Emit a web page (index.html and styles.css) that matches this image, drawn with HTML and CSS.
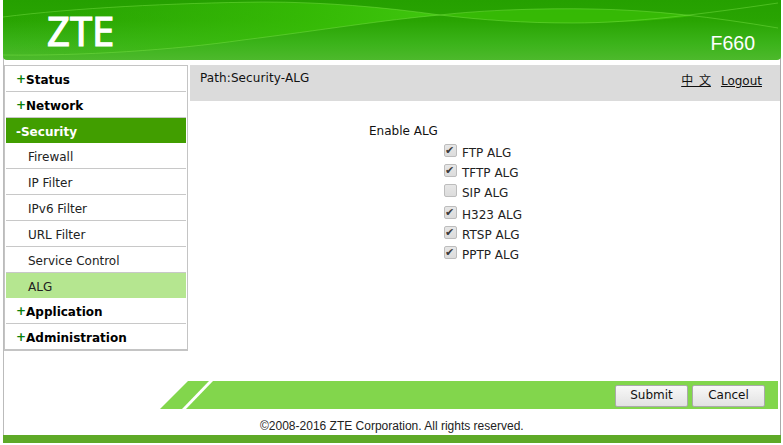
FILE: index.html
```html
<!doctype html>
<html lang="en">
<head>
	<meta charset="utf-8">
	<title>F660</title>
	<link rel="stylesheet" href="styles.css">
</head>
<body>
	<div class="page">
		<div class="header">
			<svg class="header-swoosh" width="778" height="60" viewBox="0 0 778 60">
				<defs>
					<linearGradient id="lens" x1="0" x2="1" y1="0" y2="0">
						<stop offset="0" stop-color="#37b80a" stop-opacity="0"/>
						<stop offset=".7" stop-color="#38bf06" stop-opacity=".8"/>
						<stop offset="1" stop-color="#3fc60e"/>
					</linearGradient>
				</defs>
				<path d="M0 17 C70 8 170 3 260 2 C320 2 380 7 437 15 C380 20 320 30 240 40 C170 50 80 56 0 55 Z" fill="url(#lens)"/>
				<path d="M437 15 C480 10 540 8 590 9 C630 10 660 12 690 16 C650 21 610 23 570 23 C520 23 480 20 437 15 Z" fill="#38bd06" fill-opacity=".85"/>
				<path d="M0 17 C70 8 170 3 260 2 C320 2 380 7 437 15 C480 20 520 23 570 23 C630 23 700 14 775 3" fill="none" stroke="#7ce24a" stroke-opacity=".45"/>
				<path d="M0 55 C80 56 170 50 240 40 C320 30 380 20 437 15 C480 10 540 8 590 9 C650 10 710 17 775 28" fill="none" stroke="#7ce24a" stroke-opacity=".45"/>
			</svg>
			<span class="logo">ZTE</span>
			<span class="model">F660</span>
		</div>
		<div class="main">
			<ul class="menu">
				<li class="menu-top"><b>+</b>Status</li>
				<li class="menu-top"><b>+</b>Network</li>
				<li class="menu-top menu-open">-Security</li>
				<li class="menu-sub">Firewall</li>
				<li class="menu-sub">IP Filter</li>
				<li class="menu-sub">IPv6 Filter</li>
				<li class="menu-sub">URL Filter</li>
				<li class="menu-sub">Service Control</li>
				<li class="menu-sub menu-current">ALG</li>
				<li class="menu-top"><b>+</b>Application</li>
				<li class="menu-top"><b>+</b>Administration</li>
			</ul>
			<div class="content">
				<div class="path-bar">
					<span class="path-text">Path:Security-ALG</span>
					<span class="path-links"><a class="lang">中 文</a><a>Logout</a></span>
				</div>
				<div class="form">
					<div class="form-label">Enable ALG</div>
					<div class="checks">
						<label class="check"><input type="checkbox" checked>FTP ALG</label>
						<label class="check"><input type="checkbox" checked>TFTP ALG</label>
						<label class="check"><input type="checkbox">SIP ALG</label>
						<label class="check check-gap"><input type="checkbox" checked>H323 ALG</label>
						<label class="check"><input type="checkbox" checked>RTSP ALG</label>
						<label class="check"><input type="checkbox" checked>PPTP ALG</label>
					</div>
				</div>
			</div>
		</div>
		<div class="action-row">
			<svg class="action-tail" width="55" height="28" viewBox="0 0 55 28">
				<polygon points="0,28 28,0 49,0 22,28" fill="#82d64c"/>
				<polygon points="26,28 53,0 55,0 55,28" fill="#82d64c"/>
			</svg>
			<div class="action-bar">
				<button class="btn" type="button">Submit</button>
				<button class="btn" type="button">Cancel</button>
			</div>
		</div>
		<div class="copyright">©2008-2016 ZTE Corporation. All rights reserved.</div>
		<div class="footer-bar"></div>
	</div>
</body>
</html>
```

FILE: styles.css
```css
* {
	box-sizing: border-box;
}
html, body {
	margin: 0;
	background: #fff;
}
body {
	font-family: "DejaVu Sans", sans-serif;
	font-size: 12px;
	color: #111;
	overflow: hidden;
}

.page {
	width: 778px;
	height: 443px;
	margin-left: 3px;
	border-left: 1px solid #bbb;
	border-right: 1px solid #aaa;
	display: flex;
	flex-direction: column;
}

.header {
	position: relative;
	flex: none;
	height: 60px;
	margin: 0 -1px;
	border-radius: 0 0 4px 4px;
	overflow: hidden;
	background: linear-gradient(#25a000 0, #29a402 35%, #3bb31a 72%, #4db92c 100%);
	display: flex;
	align-items: flex-start;
	justify-content: space-between;
}
.header-swoosh {
	position: absolute;
	left: 0;
	top: 0;
}
.logo {
	position: relative;
	margin: 6px 0 0 44px;
	font-family: "Noto Sans", sans-serif;
	font-size: 40px;
	line-height: 50px;
	color: #fff;
	-webkit-text-stroke: 1.2px #fff;
}
.model {
	position: relative;
	margin: 31px 26px 0 0;
	font-family: "Liberation Sans", sans-serif;
	font-size: 19.5px;
	line-height: 24px;
	color: #fff;
}

.main {
	flex: none;
	height: 321px;
	padding-top: 5px;
	display: flex;
	align-items: flex-start;
}

.menu {
	flex: none;
	width: 184px;
	margin: 0;
	padding: 0 1px;
	list-style: none;
	border: 1px solid #c4c4c4;
	border-width: 1px 1px 2px 1px;
}
.menu li {
	height: 26px;
	line-height: 29px;
	border-bottom: 1px solid #c8c8c8;
}
.menu li:last-child {
	height: 25px;
	border-bottom: 0;
}
.menu-top {
	padding-left: 10px;
	font-weight: 700;
	color: #000;
}
.menu-top b {
	color: #0a800a;
	line-height: 0;
	vertical-align: 1px;
}
.menu-sub {
	padding-left: 22px;
	color: #222;
}
.menu .menu-open {
	height: 25px;
	background: #419e00;
	color: #fff;
	border-bottom: 0;
}
.menu .menu-current {
	height: 25px;
	background: #b5e690;
	border-bottom: 0;
}

.content {
	flex: 1;
	margin-left: 2px;
}
.path-bar {
	height: 36px;
	padding: 6px 18px 0 10px;
	background: #dbdbdb;
	display: flex;
	justify-content: space-between;
}
.path-text {
	letter-spacing: .1px;
}
.path-links a {
	margin-left: 10px;
	text-decoration: underline;
	color: #111;
}
.lang {
	font-family: "Noto Sans CJK SC", sans-serif;
	word-spacing: 3px;
}

.form {
	padding: 23px 0 0 179px;
}
.form-label {
	line-height: 14px;
}
.checks {
	margin: 5px 0 0 75px;
}
.check {
	display: flex;
	align-items: center;
	height: 20px;
	color: #222;
}
.check-gap {
	margin-top: 2px;
}
.check input {
	appearance: none;
	position: relative;
	width: 13px;
	height: 13px;
	margin: 0 5px 5px 0;
	border: 1px solid #bdbdbd;
	border-radius: 2px;
	background: linear-gradient(#e6e6e6, #dcdcdc);
}
.check input:checked::after {
	content: "✔";
	position: absolute;
	left: 0;
	top: -1px;
	font-size: 11px;
	line-height: 12px;
	color: #3c3c3c;
}

.action-row {
	flex: none;
	height: 28px;
	display: flex;
	padding-left: 156px;
}
.action-tail {
	flex: none;
}
.action-bar {
	flex: 1;
	margin-right: 2px;
	background: #82d64c;
	display: flex;
	justify-content: flex-end;
	align-items: center;
	gap: 4px;
	padding: 2px 13px 0 0;
}
.btn {
	width: 73px;
	height: 22px;
	padding: 0 0 2px;
	font-family: "DejaVu Sans", sans-serif;
	font-size: 12px;
	color: #111;
	border: 1px solid #aaa;
	border-radius: 2px;
	background: linear-gradient(#f8f8f8, #e2e2e2);
}

.copyright {
	flex: none;
	height: 26px;
	padding: 10px 0 0 256px;
	font-family: "Liberation Sans", sans-serif;
	font-size: 12px;
	line-height: 14px;
	color: #222;
}
.footer-bar {
	flex: none;
	height: 8px;
	margin: 0 -1px;
	background: #5ea927;
}
```
